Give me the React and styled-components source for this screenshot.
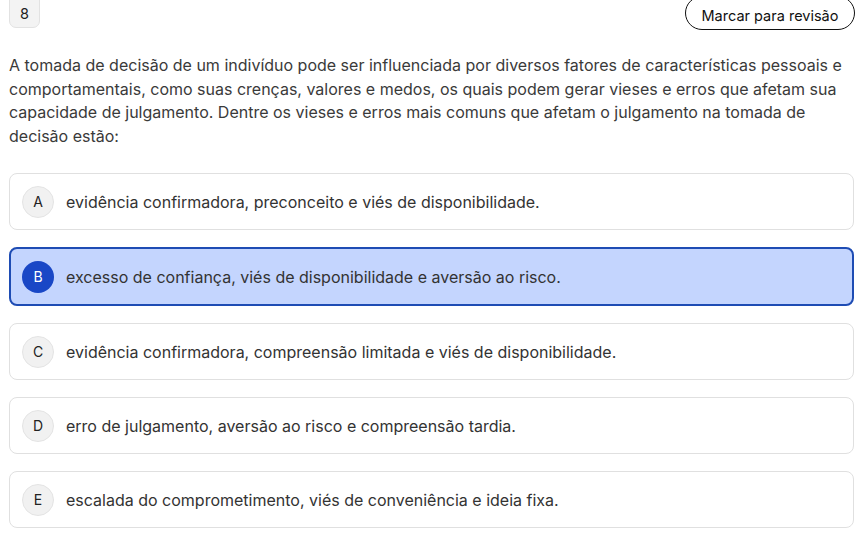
import React from "react";
import styled, { createGlobalStyle } from "styled-components";

const Global = createGlobalStyle`
  html, body { margin: 0; padding: 0; background: #fff; }
  body { font-family: Inter, "Noto Sans", sans-serif; }
  * { box-sizing: border-box; }
`;

const Page = styled.div`
  padding: 0 3px 0 9px;
  margin-top: -4px;
`;

const Header = styled.div`
  display: flex;
  justify-content: space-between;
  align-items: flex-start;
`;

const NumberBox = styled.div`
  width: 31px;
  height: 32px;
  border: 1px solid #e2e2e2;
  background: #f3f3f3;
  border-radius: 0 0 7px 7px;
  display: flex;
  align-items: center;
  justify-content: center;
  padding-top: 3px;
  font-size: 14.5px;
  color: #222;
`;

const ReviewButton = styled.button`
  height: 34px;
  width: 170px;
  margin-right: -1px;
  border: 1.5px solid #111;
  border-radius: 17px;
  background: #fff;
  font-family: Inter, "Noto Sans", sans-serif;
  font-size: 14.5px;
  color: #111;
  padding: 4px 0 0;
  cursor: pointer;
`;

const Statement = styled.p`
  margin: 24px 0 0;
  font-size: 16px;
  line-height: 23.5px;
  color: #3a3a3a;
  padding-right: 4px;
`;

const Options = styled.div`
  display: flex;
  flex-direction: column;
  gap: 17px;
  margin-top: 25px;
`;

const Option = styled.div`
  display: flex;
  align-items: center;
  gap: 12px;
  min-height: ${(p) => (p.$selected ? "59px" : "57px")};
  padding: 0 ${(p) => (p.$selected ? "11px" : "12px")};
  border: ${(p) => (p.$selected ? "2px solid #1e4cb4" : "1px solid #e0e0e0")};
  background: ${(p) => (p.$selected ? "#c4d5fe" : "#fff")};
  border-radius: 8px;
`;

const Letter = styled.div`
  flex: none;
  width: 32px;
  height: 32px;
  border-radius: 50%;
  display: flex;
  align-items: center;
  justify-content: center;
  font-size: 14px;
  font-weight: 400;
  background: ${(p) => (p.$selected ? "#1947c6" : "#f1f1f1")};
  color: ${(p) => (p.$selected ? "#fff" : "#222")};
  border: ${(p) => (p.$selected ? "none" : "1px solid #e4e4e4")};
`;

const OptionText = styled.span`
  font-size: 16px;
  color: #333;
`;

const options = [
  ["A", "evidência confirmadora, preconceito e viés de disponibilidade."],
  ["B", "excesso de confiança, viés de disponibilidade e aversão ao risco."],
  ["C", "evidência confirmadora, compreensão limitada e viés de disponibilidade."],
  ["D", "erro de julgamento, aversão ao risco e compreensão tardia."],
  ["E", "escalada do comprometimento, viés de conveniência e ideia fixa."],
];

export default function App() {
  return (
    <>
      <Global />
      <Page>
        <Header>
          <NumberBox>8</NumberBox>
          <ReviewButton>Marcar para revisão</ReviewButton>
        </Header>
        <Statement>
          A tomada de decisão de um indivíduo pode ser influenciada por diversos fatores de características pessoais e
          comportamentais, como suas crenças, valores e medos, os quais podem gerar vieses e erros que afetam sua
          capacidade de julgamento. Dentre os vieses e erros mais comuns que afetam o julgamento na tomada de
          decisão estão:
        </Statement>
        <Options>
          {options.map(([l, t]) => (
            <Option key={l} $selected={l === "B"}>
              <Letter $selected={l === "B"}>{l}</Letter>
              <OptionText>{t}</OptionText>
            </Option>
          ))}
        </Options>
      </Page>
    </>
  );
}
